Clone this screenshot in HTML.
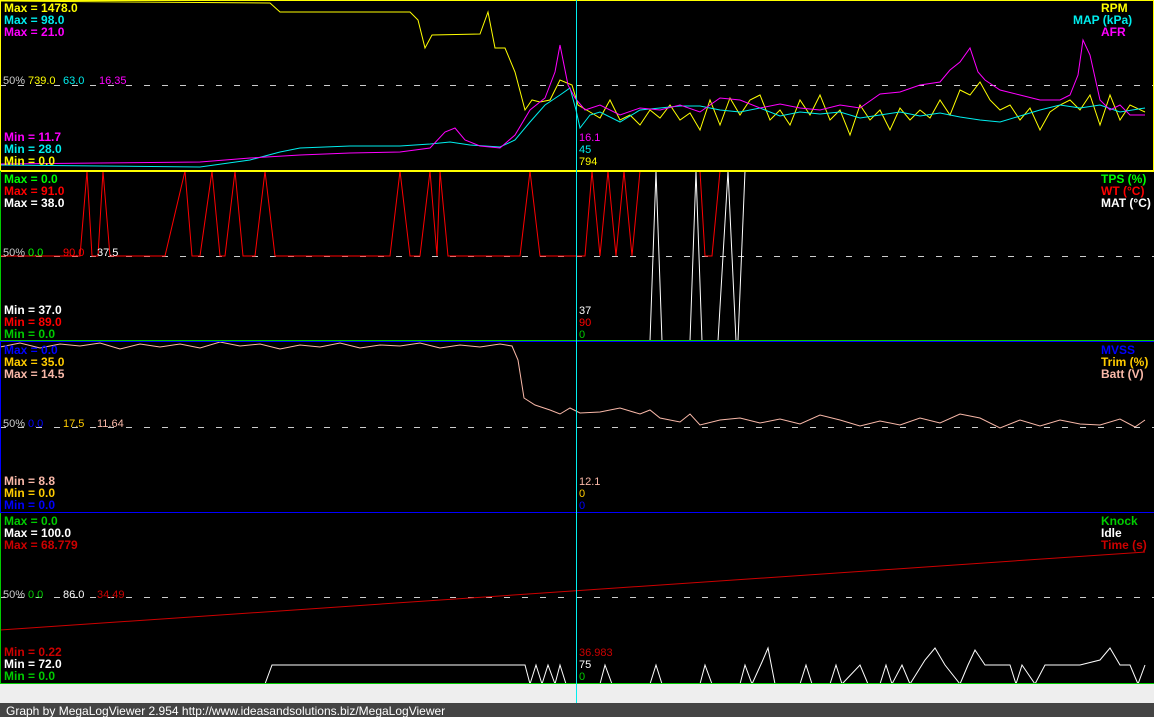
<!DOCTYPE html>
<html><head><meta charset="utf-8"><style>
html,body{margin:0;padding:0;background:#000;width:1154px;height:717px;overflow:hidden}
svg{display:block}
.b{font:bold 12px "Liberation Sans",sans-serif}
.r{font:11px "Liberation Sans",sans-serif}
</style></head><body>
<svg width="1154" height="717" xmlns="http://www.w3.org/2000/svg">
<rect width="1154" height="717" fill="#000"/>
<g stroke="#ccc" stroke-dasharray="6,12" stroke-width="1">
<line x1="0" y1="85.5" x2="1154" y2="85.5"/>
<line x1="0" y1="256.5" x2="1154" y2="256.5"/>
<line x1="0" y1="427.5" x2="1154" y2="427.5"/>
<line x1="0" y1="597.5" x2="1154" y2="597.5"/>
</g>
<polyline fill="none" stroke="#ff0" points="0,1 270,3 280,12 410,12 418,20 425,48 432,35 480,34 488,12 495,48 505,48 515,72 525,110 532,100 540,102 550,100 560,80 572,85 578,105 590,112 600,118 610,100 620,120 630,115 640,125 650,110 660,118 670,105 680,120 690,113 700,130 710,100 720,125 730,98 740,115 750,100 760,95 770,120 780,110 790,125 800,100 810,115 820,95 830,120 840,110 850,135 860,105 870,120 880,110 890,130 900,108 910,120 920,110 930,118 940,100 950,115 960,90 970,95 980,82 990,100 1000,110 1010,105 1020,120 1030,108 1040,130 1050,112 1060,105 1070,100 1080,110 1090,95 1100,125 1110,95 1120,120 1130,105 1145,112"/>
<polyline fill="none" stroke="#0ee" points="0,165 100,166 200,167 250,160 280,152 300,148 350,146 400,146 430,144 450,142 470,145 500,147 515,140 530,122 545,105 560,95 570,88 576,110 580,128 590,115 600,112 620,122 640,110 660,108 680,106 700,106 720,110 740,112 760,108 780,116 800,112 820,114 840,112 860,118 880,115 900,112 920,116 940,113 960,117 980,120 1000,122 1020,116 1040,110 1060,105 1080,108 1100,105 1120,112 1145,108"/>
<polyline fill="none" stroke="#f0f" points="0,164 100,163 200,162 250,158 300,155 350,153 400,152 430,148 445,132 455,128 465,140 480,146 500,148 515,135 530,110 545,98 555,72 560,45 568,85 575,98 585,110 600,105 620,115 640,108 660,110 680,105 700,112 720,98 740,100 760,108 780,104 800,108 820,110 840,105 860,108 880,94 900,92 920,85 940,82 950,70 960,62 970,48 978,72 985,80 1000,90 1020,95 1040,100 1060,100 1070,95 1078,75 1083,40 1090,55 1100,100 1110,110 1120,105 1130,115 1145,115"/>
<polyline fill="none" stroke="#f00" points="0,256 80,256 87,171 92,256 98,256 103,171 110,256 165,256 185,171 192,256 200,256 212,171 220,256 225,256 235,171 243,256 255,256 265,171 275,256 390,256 400,171 410,256 420,256 430,171 437,256 440,171 448,256 520,256 530,171 540,256 585,256 592,171 600,256 608,171 616,256 624,171 632,256 640,171 700,171 705,256 712,256 720,171 1154,171"/>
<polyline fill="none" stroke="#fff" points="645,341 650,341 656,171 662,341 690,341 696,171 702,341 718,341 728,171 736,341 738,341 745,171 1154,171"/>
<polyline fill="none" stroke="#f9b8a8" points="0,347 20,343 40,348 60,344 80,346 100,343 120,349 140,344 160,347 180,344 200,348 220,342 240,346 260,344 280,349 300,345 320,347 340,343 360,348 380,345 400,346 420,343 440,348 460,345 480,347 500,344 512,346 518,360 524,398 535,405 550,410 560,414 570,408 580,413 600,412 620,408 640,414 650,410 660,418 680,422 690,414 700,425 720,420 740,418 760,423 780,419 800,424 820,415 840,420 860,426 880,421 900,425 920,418 940,423 960,414 980,418 1000,428 1020,420 1040,426 1060,420 1080,424 1100,425 1120,419 1135,427 1145,420"/>
<line x1="0" y1="630" x2="1145" y2="552" stroke="#c00"/>
<polyline fill="none" stroke="#fff" points="265,684 272,665 525,665 530,684 536,665 542,684 548,665 555,684 560,665 566,684 600,684 605,665 612,684 650,684 656,665 662,684 700,684 705,665 712,684 740,684 745,665 752,684 762,662 768,648 775,684 800,684 806,665 812,684 830,684 836,665 842,684 860,665 868,684 880,684 886,665 892,684 902,665 910,684 925,660 935,648 945,665 960,684 968,665 975,650 985,665 1010,665 1016,684 1022,665 1035,684 1045,665 1080,665 1100,660 1110,648 1120,665 1130,665 1138,684 1145,665"/>
<rect x="0.5" y="0.5" width="1153" height="170" fill="none" stroke="#ff0"/>
<line x1="0" y1="171.5" x2="1154" y2="171.5" stroke="#ff0"/>
<line x1="0.5" y1="171" x2="0.5" y2="341" stroke="#0c0"/>
<line x1="0" y1="340.5" x2="1154" y2="340.5" stroke="#0c0"/>
<line x1="0" y1="341.5" x2="1154" y2="341.5" stroke="#00f"/>
<line x1="0.5" y1="342" x2="0.5" y2="512" stroke="#00f"/>
<line x1="0" y1="512.5" x2="1154" y2="512.5" stroke="#00f"/>
<line x1="0.5" y1="513" x2="0.5" y2="684" stroke="#0c0"/>
<line x1="0" y1="683.5" x2="1154" y2="683.5" stroke="#0c0"/>
<line x1="576.5" y1="0" x2="576.5" y2="703" stroke="#0ee"/>
<rect x="0" y="684" width="1154" height="19" fill="#eee"/>
<line x1="576.5" y1="684" x2="576.5" y2="703" stroke="#0ee"/>
<rect x="0" y="703" width="1154" height="14" fill="#444"/>
<text x="6" y="715" class="r" fill="#fff" style="font-size:12px">Graph by MegaLogViewer 2.954 http://www.ideasandsolutions.biz/MegaLogViewer</text>
<g class="b">
<text x="4" y="12" fill="#ff0">Max = 1478.0</text>
<text x="4" y="24" fill="#0ee">Max = 98.0</text>
<text x="4" y="36" fill="#f0f">Max = 21.0</text>
<text x="4" y="141" fill="#f0f">Min = 11.7</text>
<text x="4" y="153" fill="#0ee">Min = 28.0</text>
<text x="4" y="165" fill="#ff0">Min = 0.0</text>
<text x="1101" y="12" fill="#ff0">RPM</text>
<text x="1073" y="24" fill="#0ee">MAP (kPa)</text>
<text x="1101" y="36" fill="#f0f">AFR</text>
</g>
<g class="r">
<text x="3" y="84" fill="#ccc">50%</text><text x="28" y="84" fill="#ff0">739.0</text><text x="63" y="84" fill="#0ee">63.0</text><text x="99" y="84" fill="#f0f">16.35</text>
<text x="579" y="141" fill="#f0f">16.1</text><text x="579" y="153" fill="#0ee">45</text><text x="579" y="165" fill="#ff0">794</text>
</g>
<g class="b">
<text x="4" y="183" fill="#0f0">Max = 0.0</text>
<text x="4" y="195" fill="#f00">Max = 91.0</text>
<text x="4" y="207" fill="#fff">Max = 38.0</text>
<text x="4" y="314" fill="#fff">Min = 37.0</text>
<text x="4" y="326" fill="#f00">Min = 89.0</text>
<text x="4" y="338" fill="#0c0">Min = 0.0</text>
<text x="1101" y="183" fill="#0f0">TPS (%)</text>
<text x="1101" y="195" fill="#f00">WT (°C)</text>
<text x="1101" y="207" fill="#fff">MAT (°C)</text>
</g>
<g class="r">
<text x="3" y="256" fill="#ccc">50%</text><text x="28" y="256" fill="#0f0">0.0</text><text x="63" y="256" fill="#f00">90.0</text><text x="97" y="256" fill="#fff">37.5</text>
<text x="579" y="314" fill="#fff">37</text><text x="579" y="326" fill="#f00">90</text><text x="579" y="338" fill="#0c0">0</text>
</g>
<g class="b">
<text x="4" y="354" fill="#00f">Max = 0.0</text>
<text x="4" y="366" fill="#fc0">Max = 35.0</text>
<text x="4" y="378" fill="#f9b8a8">Max = 14.5</text>
<text x="4" y="485" fill="#f9b8a8">Min = 8.8</text>
<text x="4" y="497" fill="#fc0">Min = 0.0</text>
<text x="4" y="509" fill="#00f">Min = 0.0</text>
<text x="1101" y="354" fill="#00f">MVSS</text>
<text x="1101" y="366" fill="#fc0">Trim (%)</text>
<text x="1101" y="378" fill="#f9b8a8">Batt (V)</text>
</g>
<g class="r">
<text x="3" y="427" fill="#ccc">50%</text><text x="28" y="427" fill="#00f">0.0</text><text x="63" y="427" fill="#fc0">17.5</text><text x="97" y="427" fill="#f9b8a8">11.64</text>
<text x="579" y="485" fill="#f9b8a8">12.1</text><text x="579" y="497" fill="#fc0">0</text><text x="579" y="509" fill="#00f">0</text>
</g>
<g class="b">
<text x="4" y="525" fill="#0c0">Max = 0.0</text>
<text x="4" y="537" fill="#fff">Max = 100.0</text>
<text x="4" y="549" fill="#c00">Max = 68.779</text>
<text x="4" y="656" fill="#c00">Min = 0.22</text>
<text x="4" y="668" fill="#fff">Min = 72.0</text>
<text x="4" y="680" fill="#0c0">Min = 0.0</text>
<text x="1101" y="525" fill="#0c0">Knock</text>
<text x="1101" y="537" fill="#fff">Idle</text>
<text x="1101" y="549" fill="#c00">Time (s)</text>
</g>
<g class="r">
<text x="3" y="598" fill="#ccc">50%</text><text x="28" y="598" fill="#0c0">0.0</text><text x="63" y="598" fill="#fff">86.0</text><text x="97" y="598" fill="#c00">34.49</text>
<text x="579" y="656" fill="#c00">36.983</text><text x="579" y="668" fill="#fff">75</text><text x="579" y="680" fill="#0c0">0</text>
</g>
</svg>
</body></html>
